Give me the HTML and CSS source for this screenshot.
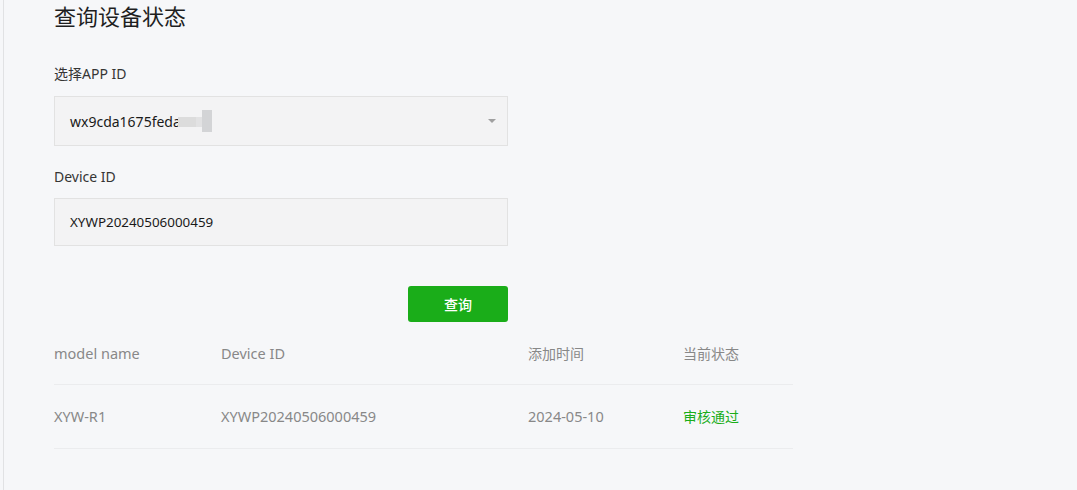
FILE: index.html
```html
<!DOCTYPE html>
<html lang="zh">
<head>
<meta charset="utf-8">
<link rel="stylesheet" href="styles.css">
</head>
<body>
<div class="page">
  <h1 class="title">查询设备状态</h1>
  <div class="form">
    <label class="label">选择APP ID</label>
    <div class="select">
      <span class="value">wx9cda1675feda<span class="mosaic"><i class="m1"></i><i class="m2"></i><i class="m3"></i></span></span>
      <span class="arrow"></span>
    </div>
    <label class="label label-gap">Device ID</label>
    <div class="input">XYWP20240506000459</div>
    <div class="actions"><button class="btn">查询</button></div>
  </div>
  <table class="table">
    <thead>
      <tr><th class="c1">model name</th><th class="c2">Device ID</th><th class="c3 cjk">添加时间</th><th class="c4 cjk">当前状态</th></tr>
    </thead>
    <tbody>
      <tr><td>XYW-R1</td><td>XYWP20240506000459</td><td>2024-05-10</td><td class="ok cjk">审核通过</td></tr>
    </tbody>
  </table>
</div>
</body>
</html>
```
FILE: styles.css
```css
html, body {
  margin: 0;
  padding: 0;
  background: #f6f7f9;
  font-family: "Noto Sans", "Noto Sans CJK SC", sans-serif;
  color: #353535;
}
body {
  padding-left: 3px;
  height: 490px;
  overflow: hidden;
}
.page {
  border-left: 1px solid #e1e2e4;
  padding: 1px 0 0 50px;
  height: 489px;
}
.title {
  margin: 0;
  font-size: 22px;
  font-weight: 400;
  line-height: 30px;
  color: #1f1f1f;
}
.form {
  width: 454px;
  margin-top: 33px;
  display: flex;
  flex-direction: column;
}
.label {
  font-size: 14px;
  line-height: 20px;
  color: #353535;
  margin-bottom: 12px;
}
.label-gap {
  margin-top: 21px;
  margin-bottom: 11px;
}
.select {
  box-sizing: border-box;
  height: 50px;
  border: 1px solid #e2e2e2;
  background: #f3f3f4;
  display: flex;
  align-items: center;
  justify-content: space-between;
  padding: 0 11px 0 15px;
  font-size: 14px;
  color: #1a1a1a;
}
.value {
  display: inline-flex;
  align-items: center;
}
.mosaic {
  display: inline-flex;
  align-items: center;
  height: 20px;
  margin-left: -3px;
}
.mosaic i {
  display: block;
}
.m1 { width: 18px; height: 10px; background: #dcdcdc; margin-top: 2px; }
.m2 { width: 6px; height: 10px; background: #e2e2e3; margin-top: 2px; }
.m3 { width: 10px; height: 22px; background: #d3d4d6; }
.arrow {
  width: 0;
  height: 0;
  border-left: 4px solid transparent;
  border-right: 4px solid transparent;
  border-top: 4px solid #a0a0a0;
}
.input {
  box-sizing: border-box;
  height: 48px;
  border: 1px solid #e2e2e2;
  background: #f3f3f4;
  display: flex;
  align-items: center;
  padding-left: 15px;
  font-size: 13.4px;
  color: #1a1a1a;
}
.actions {
  display: flex;
  justify-content: flex-end;
  margin-top: 40px;
}
.btn {
  width: 100px;
  height: 36px;
  border: none;
  border-radius: 3px;
  background: #1aad19;
  color: #fff;
  font-family: inherit;
  font-size: 14px;
  font-weight: 500;
  padding: 0;
}
.table {
  width: 739px;
  border-collapse: collapse;
  font-size: 14.5px;
  table-layout: fixed;
}
.table th, .table td {
  text-align: left;
  font-weight: 400;
  color: #888;
  padding: 0;
}
.table th {
  height: 62px;
  border-bottom: 1px solid #ebecee;
}
.table td {
  height: 61px;
  padding-bottom: 2px;
  border-bottom: 1px solid #ebecee;
}
.table .cjk { font-size: 14px; }
.c1 { width: 167px; }
.c2 { width: 307px; }
.c3 { width: 155px; }
.c4 { width: 110px; }
.table td.ok { color: #1aad19; }
```
